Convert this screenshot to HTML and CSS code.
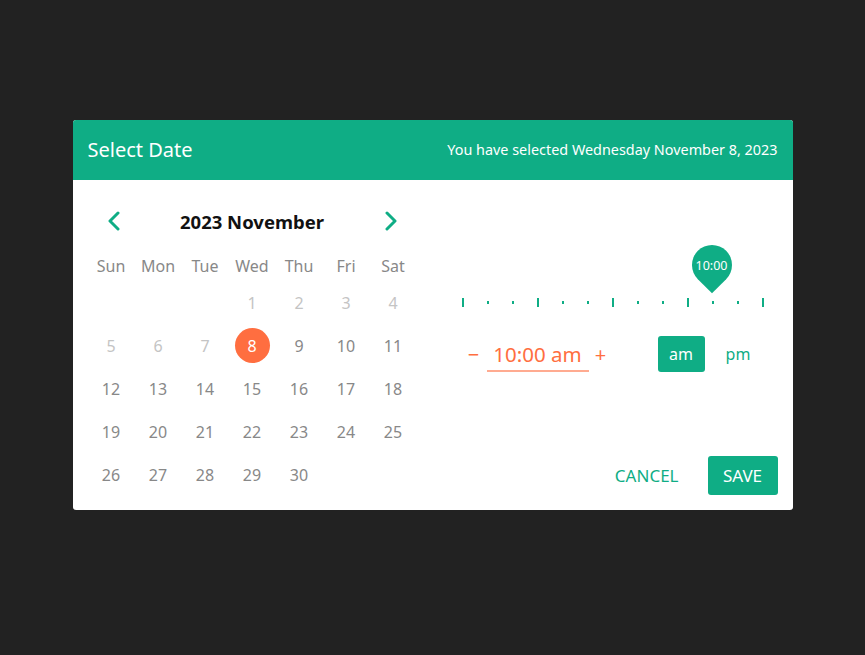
FILE: index.html
```html
<!DOCTYPE html>
<html>
<head>
	<title>Select Date</title>
	<link rel="stylesheet" href="styles.css">
</head>
<body>
	<div class="picker">
		<div class="picker-header">
			<h2 class="picker-title">Select Date</h2>
			<span class="picker-summary">You have selected Wednesday November 8, 2023</span>
		</div>
		<div class="picker-body">
			<div class="calendar">
				<div class="month-nav">
					<button class="nav-arrow">
						<svg width="14" height="20" viewBox="0 0 14 20"><path d="M11 2 L3 10 L11 18" fill="none" stroke="#0fad85" stroke-width="3" stroke-linecap="round" stroke-linejoin="round"/></svg>
					</button>
					<span class="month-title">2023 November</span>
					<button class="nav-arrow">
						<svg width="14" height="20" viewBox="0 0 14 20"><path d="M3 2 L11 10 L3 18" fill="none" stroke="#0fad85" stroke-width="3" stroke-linecap="round" stroke-linejoin="round"/></svg>
					</button>
				</div>
				<div class="weekdays">
					<span>Sun</span><span>Mon</span><span>Tue</span><span>Wed</span><span>Thu</span><span>Fri</span><span>Sat</span>
				</div>
				<div class="days">
					<span></span><span></span><span></span>
					<span class="day past">1</span><span class="day past">2</span><span class="day past">3</span><span class="day past">4</span>
					<span class="day past">5</span><span class="day past">6</span><span class="day past">7</span>
					<span class="day selected"><b>8</b></span><span class="day">9</span><span class="day">10</span><span class="day">11</span>
					<span class="day">12</span><span class="day">13</span><span class="day">14</span><span class="day">15</span><span class="day">16</span><span class="day">17</span><span class="day">18</span>
					<span class="day">19</span><span class="day">20</span><span class="day">21</span><span class="day">22</span><span class="day">23</span><span class="day">24</span><span class="day">25</span>
					<span class="day">26</span><span class="day">27</span><span class="day">28</span><span class="day">29</span><span class="day">30</span>
				</div>
			</div>
			<div class="time">
				<div class="slider">
					<div class="pin"><span>10:00</span></div>
					<i class="tick big"></i><i class="tick"></i><i class="tick"></i>
					<i class="tick big"></i><i class="tick"></i><i class="tick"></i>
					<i class="tick big"></i><i class="tick"></i><i class="tick"></i>
					<i class="tick big"></i><i class="tick"></i><i class="tick"></i>
					<i class="tick big"></i>
				</div>
				<div class="time-row">
					<button class="step">&minus;</button>
					<span class="time-value">10:00 am</span>
					<button class="step">+</button>
					<div class="meridiem">
						<button class="meridiem-btn active">am</button>
						<button class="meridiem-btn">pm</button>
					</div>
				</div>
				<div class="actions">
					<button class="cancel">CANCEL</button>
					<button class="save">SAVE</button>
				</div>
			</div>
		</div>
	</div>
</body>
</html>
```

FILE: styles.css
```css
body {
	margin: 0;
	padding: 0;
	background-color: #222222;
	font-family: "Noto Sans", "Open Sans", sans-serif;
}

button {
	font-family: inherit;
	border: 0;
	background: none;
	padding: 0;
	cursor: pointer;
}

.picker {
	width: 720px;
	margin: 120px auto 0;
	background-color: white;
	border-radius: 3px;
	overflow: hidden;
}

.picker-header {
	height: 60px;
	background-color: #0fad85;
	color: white;
	display: flex;
	align-items: center;
	justify-content: space-between;
	padding: 0 15px;
}
.picker-title {
	margin: 0 0 2px;
	font-size: 20px;
	font-weight: normal;
}
.picker-summary {
	font-size: 14.4px;
	margin-bottom: 2px;
}

.picker-body {
	display: flex;
	height: 330px;
}

.calendar {
	width: 329px;
	padding: 21px 0 0 15px;
}
.month-nav {
	height: 40px;
	display: flex;
	align-items: center;
	justify-content: space-between;
	padding: 0 19px 0 19px;
	margin-bottom: 10px;
}
.nav-arrow {
	width: 14px;
	height: 20px;
	display: flex;
}
.month-title {
	font-size: 18.5px;
	font-weight: bold;
	color: #111111;
}
.weekdays, .days {
	display: grid;
	grid-template-columns: repeat(7, 47px);
	text-align: center;
	color: #888888;
	font-size: 16px;
}
.weekdays span {
	height: 30px;
	line-height: 30px;
}
.days span {
	height: 43px;
	display: flex;
	align-items: center;
	justify-content: center;
}
.day.past {
	color: #c4c4c4;
}
.day.selected b {
	width: 35px;
	height: 35px;
	border-radius: 50%;
	background-color: #ff6e40;
	color: white;
	font-weight: normal;
	display: flex;
	align-items: center;
	justify-content: center;
}

.time {
	flex: 1;
	display: flex;
	flex-direction: column;
	padding: 0 15px 15px 30px;
}
.slider {
	position: relative;
	width: 302px;
	height: 9px;
	margin: 118px 0 0 15px;
	display: flex;
	align-items: center;
	justify-content: space-between;
}
.tick {
	width: 2px;
	height: 3px;
	background-color: #0fad85;
}
.tick.big {
	height: 9px;
}
.pin {
	position: absolute;
	left: 230px;
	top: -53px;
	width: 40px;
	height: 40px;
	display: flex;
	align-items: center;
	justify-content: center;
}
.pin::before {
	content: "";
	position: absolute;
	inset: 0;
	background-color: #0fad85;
	border-radius: 50% 50% 0 50%;
	transform: rotate(45deg);
}
.pin span {
	position: relative;
	color: white;
	font-size: 12.5px;
}

.time-row {
	display: flex;
	align-items: center;
	height: 36px;
	margin: 29px 0 0 15px;
}
.step {
	width: 24px;
	color: #ff6e40;
	font-size: 20px;
}
.time-value {
	width: 102px;
	text-align: center;
	color: #ff6e40;
	font-size: 20.5px;
	line-height: 32px;
	border-bottom: 2px solid #ffab91;
	margin: 2px 0 0 1px;
}
.meridiem {
	display: flex;
	gap: 10px;
	margin-left: 45px;
}
.meridiem-btn {
	width: 47px;
	height: 36px;
	border-radius: 3px;
	color: #0fad85;
	font-size: 16px;
}
.meridiem-btn.active {
	background-color: #0fad85;
	color: white;
}

.actions {
	margin-top: auto;
	display: flex;
	justify-content: flex-end;
	align-items: center;
	gap: 29px;
}
.cancel {
	color: #0fad85;
	font-size: 17px;
}
.save {
	width: 70px;
	height: 39px;
	border-radius: 3px;
	background-color: #0fad85;
	color: white;
	font-size: 17px;
}
```
